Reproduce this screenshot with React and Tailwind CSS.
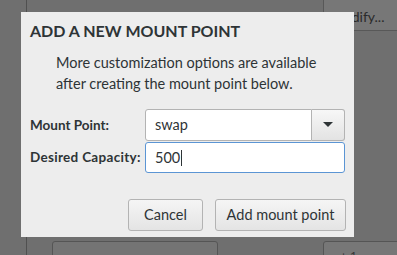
export default function App() {
  return (
    <div className="relative w-[397px] h-[255px] overflow-hidden bg-[#6f6f6f] font-['Lato',sans-serif] text-[#2e3436]">
      {/* background window bits */}
      <div className="absolute left-[26px] top-0 h-full w-px bg-[#505050]" />
      <div className="absolute left-[323px] top-[-4px] w-[90px] h-[35px] rounded-[3px] border border-[#585858] bg-[#777777] pl-[7px] pt-[9px] text-[14px] text-[#2a2a2a]">
        Modify...
      </div>
      <div className="absolute left-[52px] top-[241px] w-[166px] h-[30px] rounded-[3px] border border-[#555555] bg-[#747474]" />
      <div className="absolute left-[323px] top-[241px] w-[90px] h-[30px] rounded-[3px] border border-[#555555] bg-[#777777] pl-[16px] pt-[5px] text-[12px] text-[#333]">
        + 1
      </div>

      {/* dialog */}
      <div className="absolute left-[21px] top-[12px] w-[333px] h-[225px] bg-[#ededed] flex flex-col">
        <h1 className="ml-[9px] mt-[10px] text-[16px] font-bold leading-[18px] text-[#2e3436]">
          ADD A NEW MOUNT POINT
        </h1>
        <p className="ml-[35px] mt-[12px] text-[14.5px] leading-[21px] text-[#2e3436]">
          More customization options are available
          <br />
          after creating the mount point below.
        </p>
        <div className="ml-[9px] mt-[15px] flex flex-col gap-[1px]">
          <div className="flex items-center">
            <span className="w-[115px] text-[13.5px] font-bold">Mount Point:</span>
            <div className="flex h-[32px] w-[200px]">
              <div className="flex-1 flex items-center pl-[9px] text-[14.5px] rounded-l-[3px] border border-[#b3b3b3] bg-white">
                swap
              </div>
              <div className="w-[33px] flex items-center justify-center rounded-r-[3px] border border-l-0 border-[#b3b3b3] bg-gradient-to-b from-[#f7f7f7] to-[#e3e3e3]">
                <svg width="10" height="6" viewBox="0 0 10 6">
                  <path d="M0 0 L10 0 L5 5 Z" fill="#2e3436" />
                </svg>
              </div>
            </div>
          </div>
          <div className="flex items-center">
            <span className="w-[115px] text-[13.5px] font-bold tracking-[0.3px]">Desired Capacity:</span>
            <div className="flex items-center h-[31px] w-[200px] pl-[9px] text-[14.5px] rounded-[3px] border border-[#5b95d4] bg-white">
              500
              <span className="ml-px w-px h-[16px] bg-[#2e3436]" />
            </div>
          </div>
        </div>
        <div className="mt-[26px] ml-[107px] flex gap-[12px]">
          <button className="w-[75px] h-[32px] rounded-[3px] border border-[#b3b3b3] bg-gradient-to-b from-[#f5f5f5] to-[#e4e4e4] text-[14.5px] text-[#2e3436]">
            Cancel
          </button>
          <button className="w-[131px] h-[32px] rounded-[3px] border border-[#b3b3b3] bg-gradient-to-b from-[#f5f5f5] to-[#e4e4e4] text-[14.5px] text-[#2e3436]">
            Add mount point
          </button>
        </div>
      </div>
    </div>
  );
}
